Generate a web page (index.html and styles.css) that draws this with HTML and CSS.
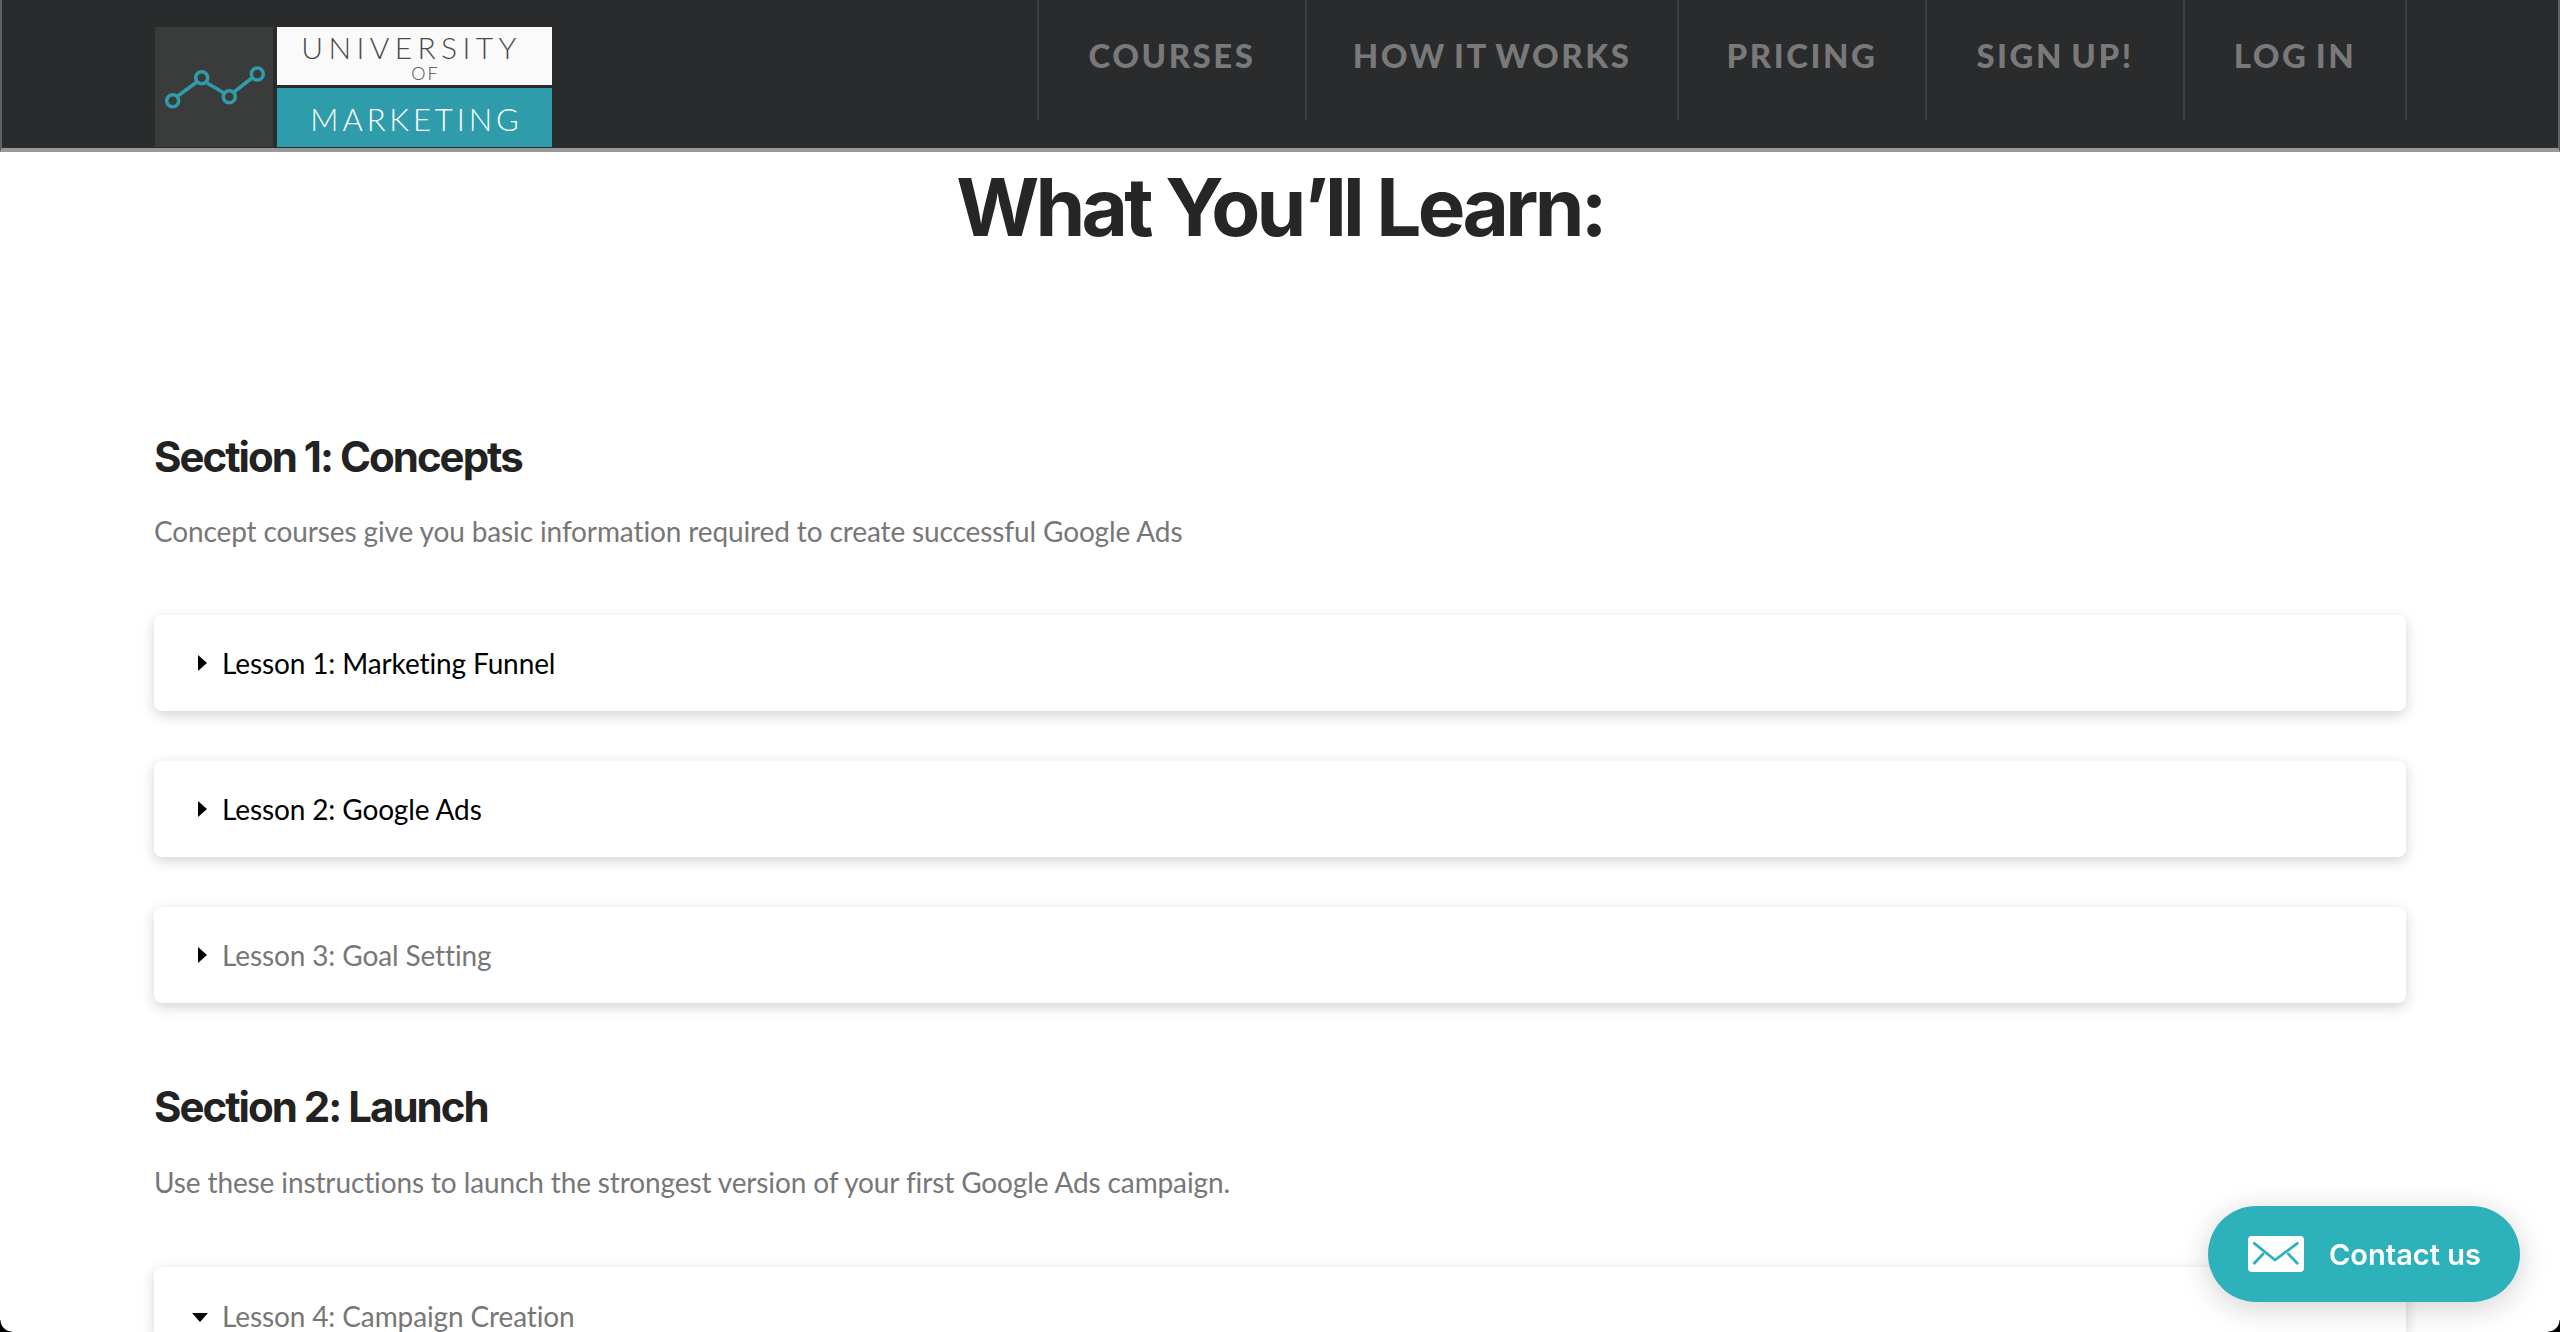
FILE: index.html
```html
<!DOCTYPE html>
<html lang="en">
<head>
<meta charset="utf-8">
<title>What You'll Learn</title>
<link rel="stylesheet" href="styles.css">
</head>
<body>
<header class="topbar">
  <div class="logo">
    <div class="logo-mark">
      <svg width="118" height="120" viewBox="0 0 118 120" fill="none" stroke="#2f9cab" stroke-width="3.5">
        <path d="M22 69.5 L42.500 54.500 M52 56 L69 66 M79 65 L97 51"/>
        <circle cx="17.700" cy="73.700" r="6"/>
        <circle cx="46.700" cy="50.700" r="6"/>
        <circle cx="74.300" cy="69.700" r="6"/>
        <circle cx="102.300" cy="47" r="6"/>
      </svg>
    </div>
    <div class="logo-words">
      <div class="logo-top"><span class="logo-uni">UNIVERSITY</span><span class="logo-of">OF</span></div>
      <div class="logo-bottom">MARKETING</div>
    </div>
  </div>
  <nav class="nav">
    <a class="nav-item nav-courses">COURSES</a>
    <a class="nav-item nav-how">HOW IT WORKS</a>
    <a class="nav-item nav-pricing">PRICING</a>
    <a class="nav-item nav-signup">SIGN UP!</a>
    <a class="nav-item nav-login">LOG IN</a>
  </nav>
</header>
<main class="content">
  <h1 class="title">What You’ll Learn:</h1>
  <section class="section section-one">
    <h2 class="section-title">Section 1: Concepts</h2>
    <p class="section-desc">Concept courses give you basic information required to create successful Google Ads</p>
    <div class="lesson"><span class="tri"></span><span class="lesson-name done">Lesson 1: Marketing Funnel</span></div>
    <div class="lesson"><span class="tri"></span><span class="lesson-name done">Lesson 2: Google Ads</span></div>
    <div class="lesson"><span class="tri"></span><span class="lesson-name">Lesson 3: Goal Setting</span></div>
  </section>
  <section class="section section-two">
    <h2 class="section-title">Section 2: Launch</h2>
    <p class="section-desc">Use these instructions to launch the strongest version of your first Google Ads campaign.</p>
    <div class="lesson lesson-open"><span class="tri tri-open"></span><span class="lesson-name">Lesson 4: Campaign Creation</span></div>
  </section>
</main>
<a class="contact">
  <svg class="contact-icon" width="56" height="36" viewBox="0 0 56 36">
    <rect width="56" height="36" rx="4" fill="#fff"/>
    <path d="M6.300 7.300 L27 24 L49.300 7.300 M6.300 27.300 L15 18 M49.300 27.300 L40.300 18" fill="none" stroke="#2db2bc" stroke-width="2.800" stroke-linecap="round" stroke-linejoin="round"/>
  </svg>
  <span>Contact us</span>
</a>
<div class="corner corner-left"></div>
<div class="corner corner-right"></div>
</body>
</html>
```
FILE: styles.css
```css
* { box-sizing: border-box; }
html, body { margin: 0; height: 100%; }
body {
  height: 1332px;
  overflow: hidden;
  background: #fff;
  font-family: "Lato", sans-serif;
  color: #777;
}
.topbar {
  height: 152px;
  background: #2a2b2d;
  border-bottom: 4px solid #999;
  border-left: 2px solid #59646a;
  border-right: 2px solid #59646a;
  display: flex;
  justify-content: space-between;
  padding: 27px 151px 0 153px;
}
.logo { display: flex; gap: 4px; height: 120px; width: 397px; }
.logo-mark { width: 118px; background: #3a3c3b; }
.logo-mark svg { display: block; }
.logo-words { flex: 1; display: flex; flex-direction: column; gap: 3px; }
.logo-top {
  height: 58px;
  background: #fafafa;
  color: #4a4a4a;
  display: flex;
  flex-direction: column;
  align-items: center;
  padding: 6px 6px 0 0;
  font-weight: 300;
}
.logo-uni { font-size: 30px; line-height: 28px; letter-spacing: 5.400px; }
.logo-of { font-size: 18px; line-height: 18px; letter-spacing: 2px; margin-top: 3px; padding-left: 28px; }
.logo-bottom {
  flex: 1;
  background: #2f9cab;
  color: #fff;
  font-size: 31px;
  font-weight: 300;
  letter-spacing: 3.900px;
  text-align: center;
  padding: 12px 0 0 4px;
  line-height: 38px;
}
.nav { display: flex; height: 120px; margin-top: -27px; border-right: 2px solid #3d3e40; }
.nav-item {
  border-left: 2px solid #3d3e40;
  padding-top: 37px;
  color: #787978;
  font-family: "Lato", sans-serif;
  font-weight: 900;
  font-size: 33px;
  line-height: 36px;
  letter-spacing: 2.500px;
  word-spacing: -3px;
  text-align: center;
}
.nav-courses { width: 268px; }
.nav-how { width: 372px; }
.nav-pricing { width: 248px; }
.nav-signup { width: 258px; }
.nav-login { width: 222px; }
.content { padding: 0 154px; }
.title {
  margin: 0;
  padding-top: 10px;
  text-align: center;
  color: #262626;
  font-family: "Inter", sans-serif;
  font-weight: 700;
  font-size: 80px;
  line-height: 90px;
  letter-spacing: -3.700px;
}
.section-one { padding-top: 181px; }
.section-two { padding-top: 80px; }
.section-title {
  margin: 0;
  color: #222;
  font-family: "Inter", sans-serif;
  font-weight: 700;
  font-size: 42px;
  line-height: 48px;
  letter-spacing: -2px;
}
.section-desc {
  margin: 30px 0 0;
  font-size: 28px;
  line-height: 40px;
  height: 104px;
  letter-spacing: -.12px;
}
.section-two .section-desc { margin-top: 31px; height: 105px; }
.lesson {
  height: 96px;
  margin-bottom: 50px;
  background: #fff;
  border-radius: 8px;
  box-shadow: 0 4px 14px rgba(0, 0, 0, .18);
  display: flex;
  align-items: center;
  gap: 15px;
  padding: 0 44px;
  font-size: 28px;
  letter-spacing: -.12px;
}
.section-one .lesson:last-child { margin-bottom: 0; }
.lesson-name.done { color: #000; }
.lesson-open {
  height: 67px;
  margin-bottom: 0;
  border-radius: 8px 8px 0 0;
  align-items: flex-start;
  padding-top: 32px;
}
.lesson-open .lesson-name { line-height: 34px; }
.tri {
  width: 0; height: 0;
  border-style: solid;
  border-width: 8px 0 8px 9px;
  border-color: transparent transparent transparent #000;
}
.tri-open {
  border-width: 9px 8px 0 8px;
  border-color: #000 transparent transparent transparent;
  margin: 14px -1px 0 -6px;
}
.contact {
  position: fixed;
  left: 2208px;
  top: 1206px;
  width: 312px;
  height: 96px;
  border-radius: 48px;
  background: #2db2bc;
  box-shadow: 0 6px 30px rgba(0, 0, 0, .18);
  display: flex;
  align-items: center;
  gap: 25px;
  padding-left: 40px;
  color: #fff;
  font-family: "Inter", sans-serif;
  font-weight: 600;
  font-size: 29px;
}
.corner { position: fixed; bottom: 0; width: 12px; height: 12px; }
.corner-left { left: 0; background: radial-gradient(circle at 100% 0, transparent 11px, #000 12px); }
.corner-right { right: 0; background: radial-gradient(circle at 0 0, transparent 11px, #000 12px); }
```
